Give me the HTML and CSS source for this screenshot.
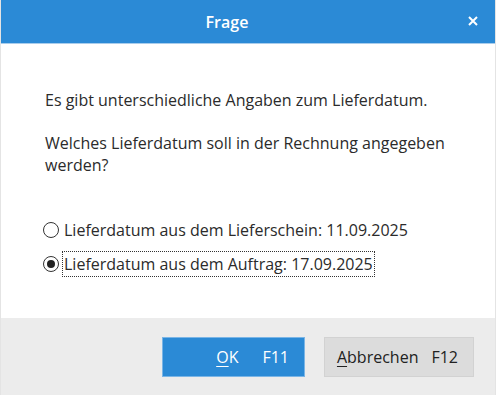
FILE: index.html
```html
<!DOCTYPE html>
<html lang="de">
  <head>
    <meta charset="UTF-8" />
    <meta name="viewport" content="width=device-width, initial-scale=1.0" />
    <title>Frage</title>
    <link rel="stylesheet" href="styles.css">
  </head>
  <body>
    <div class="dialog">
      <div class="title-bar">
        <span class="title">Frage</span>
        <span class="close">
          <svg width="10" height="10" viewBox="0 0 10 10">
            <path d="M1 1 L9 9 M9 1 L1 9" stroke="#fff" stroke-width="2" />
          </svg>
        </span>
      </div>
      <div class="content">
        <p class="msg">Es gibt unterschiedliche Angaben zum Lieferdatum.</p>
        <p class="msg">Welches Lieferdatum soll in der Rechnung angegeben werden?</p>
        <div class="options">
          <label class="option">
            <span class="radio"></span>
            <span class="label-text">Lieferdatum aus dem Lieferschein: 11.09.2025</span>
          </label>
          <label class="option">
            <span class="radio checked"></span>
            <span class="label-text focused">Lieferdatum aus dem Auftrag: 17.09.2025</span>
          </label>
        </div>
      </div>
      <div class="footer">
        <button class="btn btn-primary"><span class="btn-label"><u>O</u>K</span><span class="key">F11</span></button>
        <button class="btn btn-secondary"><span class="btn-label"><u>A</u>bbrechen</span><span class="key">F12</span></button>
      </div>
    </div>
  </body>
</html>
```

FILE: styles.css
```css
body {
  margin: 0;
  font-family: "Open Sans", "Noto Sans", sans-serif;
  background-color: #fff;
}
.dialog {
  width: 496px;
  height: 395px;
  display: flex;
  flex-direction: column;
  border-left: 1px solid #e4e4e4;
  border-right: 1px solid #e4e4e4;
  box-sizing: border-box;
}
.title-bar {
  height: 43px;
  background-color: #2b8ad6;
  border-bottom: 1px solid #a9cdec;
  display: flex;
  align-items: center;
  justify-content: center;
  position: relative;
  color: #fff;
}
.title {
  font-size: 16px;
  font-weight: 600;
  margin-left: -42px;
}
.close {
  position: absolute;
  right: 17px;
  top: 16px;
  width: 10px;
  height: 10px;
  display: flex;
}
.content {
  flex: 1;
  padding: 45px 36px 0 44px;
  color: #2b2b2b;
  font-size: 16px;
}
.msg {
  margin: 0 0 21px 0;
  line-height: 22px;
}
.options {
  margin-top: 41px;
  display: flex;
  flex-direction: column;
  gap: 8px;
}
.option {
  display: flex;
  align-items: center;
  height: 26px;
  margin-left: -2px;
}
.radio {
  width: 16px;
  height: 16px;
  border: 1px solid #333;
  border-radius: 50%;
  box-sizing: border-box;
  margin-right: 3px;
  position: relative;
}
.radio.checked::after {
  content: "";
  position: absolute;
  left: 3px;
  top: 3px;
  width: 8px;
  height: 8px;
  border-radius: 50%;
  background-color: #222;
}
.label-text {
  line-height: 22px;
  padding: 1px 1px 1px 1px;
  border: 1px dotted transparent;
}
.label-text.focused {
  border-color: #333;
}
.footer {
  height: 77px;
  background-color: #ececec;
  display: flex;
  align-items: center;
  justify-content: flex-end;
  gap: 19px;
  padding-right: 21px;
}
.btn {
  height: 40px;
  font-family: inherit;
  font-size: 16px;
  display: flex;
  align-items: center;
  justify-content: flex-end;
  gap: 24px;
  padding: 0 15px 0 0;
  cursor: pointer;
}
.btn u {
  text-underline-offset: 3px;
}
.btn-primary {
  width: 143px;
  background-color: #2b8ad6;
  border: 1px solid #7ab5e6;
  color: #fff;
}
.btn-secondary {
  width: 150px;
  background-color: #dcdcdc;
  border: 1px solid #d2d2d2;
  color: #222;
  gap: 13px;
}
```
